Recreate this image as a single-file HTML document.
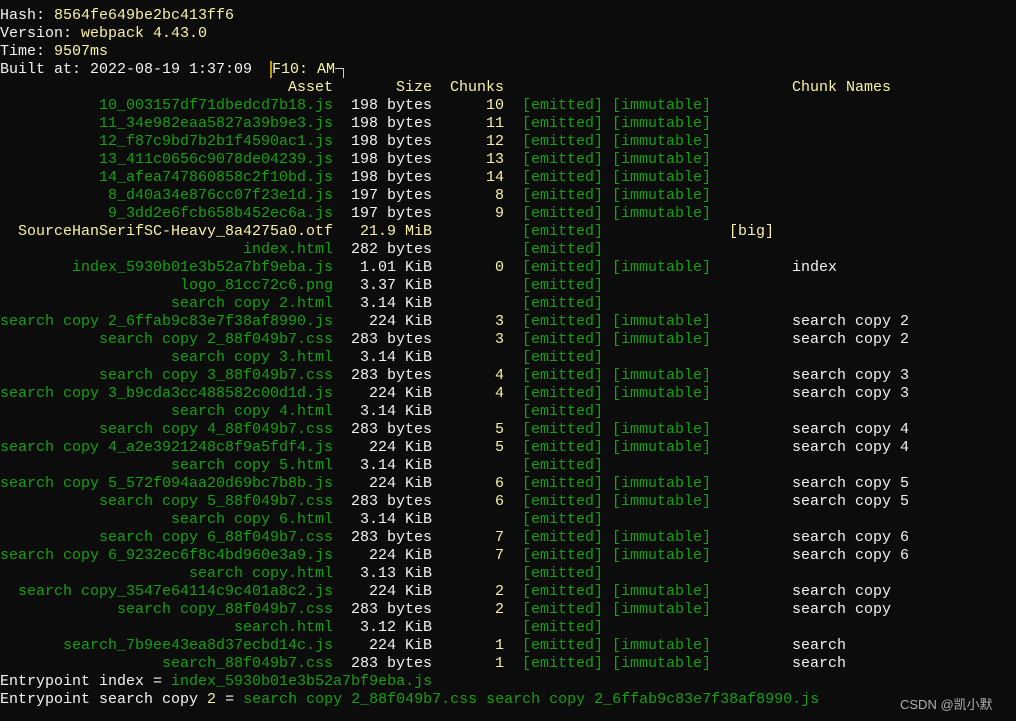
<!DOCTYPE html>
<html><head><meta charset="utf-8"><style>
html,body{margin:0;padding:0;background:#0c0c0c;width:1016px;height:721px;overflow:hidden}
body{font-family:"Liberation Mono",monospace;font-size:15px;color:#f2f2f2;position:relative}
.r{position:absolute;left:0;height:18px;line-height:18px;white-space:pre;width:1016px}
.r span{position:absolute;top:0}
.a{right:683px;color:#13a10e;text-align:right}
.s{right:584px;color:#f2f2f2}
.c{right:512px;color:#f9f1a5}
.e{left:522px;color:#13a10e}
.i{left:612px;color:#13a10e}
.n{left:792px;color:#f2f2f2}
.y{color:#f9f1a5}
.g{color:#13a10e}
.w{position:absolute;left:900px;top:694px;font-family:"Liberation Sans","Noto Sans CJK SC",sans-serif;font-size:13px;color:#b0b0b0}
</style></head><body>
<div class="r" style="top:7px">Hash: <b class="y" style="font-weight:normal">8564fe649be2bc413ff6</b></div>
<div class="r" style="top:25px">Version: <b class="y" style="font-weight:normal">webpack 4.43.0</b></div>
<div class="r" style="top:43px">Time: <b class="y" style="font-weight:normal">9507ms</b></div>
<div class="r" style="top:61px">Built at: 2022-08-19 1:37:09  <b class="y" style="font-weight:normal;border-left:2px solid #c19c00">F10: AM</b><b style="display:inline-block;width:9px;height:10px;vertical-align:middle;border-top:1px solid #ccc;border-right:1px solid #ccc;position:relative;top:4px;box-sizing:border-box;font-weight:normal"></b></div>
<div class="r" style="top:79px"><span class="a y">Asset</span><span class="s y">Size</span><span class="y" style="left:450px">Chunks</span><span class="y" style="left:792px">Chunk Names</span></div>

<div class="r" style="top:97px"><span class="a">10_003157df71dbedcd7b18.js</span><span class="s">198 bytes</span><span class="c">10</span><span class="e">[emitted]</span><span class="i">[immutable]</span></div>
<div class="r" style="top:115px"><span class="a">11_34e982eaa5827a39b9e3.js</span><span class="s">198 bytes</span><span class="c">11</span><span class="e">[emitted]</span><span class="i">[immutable]</span></div>
<div class="r" style="top:133px"><span class="a">12_f87c9bd7b2b1f4590ac1.js</span><span class="s">198 bytes</span><span class="c">12</span><span class="e">[emitted]</span><span class="i">[immutable]</span></div>
<div class="r" style="top:151px"><span class="a">13_411c0656c9078de04239.js</span><span class="s">198 bytes</span><span class="c">13</span><span class="e">[emitted]</span><span class="i">[immutable]</span></div>
<div class="r" style="top:169px"><span class="a">14_afea747860858c2f10bd.js</span><span class="s">198 bytes</span><span class="c">14</span><span class="e">[emitted]</span><span class="i">[immutable]</span></div>
<div class="r" style="top:187px"><span class="a">8_d40a34e876cc07f23e1d.js</span><span class="s">197 bytes</span><span class="c">8</span><span class="e">[emitted]</span><span class="i">[immutable]</span></div>
<div class="r" style="top:205px"><span class="a">9_3dd2e6fcb658b452ec6a.js</span><span class="s">197 bytes</span><span class="c">9</span><span class="e">[emitted]</span><span class="i">[immutable]</span></div>
<div class="r" style="top:223px"><span class="a y">SourceHanSerifSC-Heavy_8a4275a0.otf</span><span class="s y">21.9 MiB</span><span class="e">[emitted]</span><span class="y" style="left:729px">[big]</span></div>
<div class="r" style="top:241px"><span class="a">index.html</span><span class="s">282 bytes</span><span class="e">[emitted]</span></div>
<div class="r" style="top:259px"><span class="a">index_5930b01e3b52a7bf9eba.js</span><span class="s">1.01 KiB</span><span class="c">0</span><span class="e">[emitted]</span><span class="i">[immutable]</span><span class="n">index</span></div>
<div class="r" style="top:277px"><span class="a">logo_81cc72c6.png</span><span class="s">3.37 KiB</span><span class="e">[emitted]</span></div>
<div class="r" style="top:295px"><span class="a">search copy 2.html</span><span class="s">3.14 KiB</span><span class="e">[emitted]</span></div>
<div class="r" style="top:313px"><span class="a">search copy 2_6ffab9c83e7f38af8990.js</span><span class="s">224 KiB</span><span class="c">3</span><span class="e">[emitted]</span><span class="i">[immutable]</span><span class="n">search copy 2</span></div>
<div class="r" style="top:331px"><span class="a">search copy 2_88f049b7.css</span><span class="s">283 bytes</span><span class="c">3</span><span class="e">[emitted]</span><span class="i">[immutable]</span><span class="n">search copy 2</span></div>
<div class="r" style="top:349px"><span class="a">search copy 3.html</span><span class="s">3.14 KiB</span><span class="e">[emitted]</span></div>
<div class="r" style="top:367px"><span class="a">search copy 3_88f049b7.css</span><span class="s">283 bytes</span><span class="c">4</span><span class="e">[emitted]</span><span class="i">[immutable]</span><span class="n">search copy 3</span></div>
<div class="r" style="top:385px"><span class="a">search copy 3_b9cda3cc488582c00d1d.js</span><span class="s">224 KiB</span><span class="c">4</span><span class="e">[emitted]</span><span class="i">[immutable]</span><span class="n">search copy 3</span></div>
<div class="r" style="top:403px"><span class="a">search copy 4.html</span><span class="s">3.14 KiB</span><span class="e">[emitted]</span></div>
<div class="r" style="top:421px"><span class="a">search copy 4_88f049b7.css</span><span class="s">283 bytes</span><span class="c">5</span><span class="e">[emitted]</span><span class="i">[immutable]</span><span class="n">search copy 4</span></div>
<div class="r" style="top:439px"><span class="a">search copy 4_a2e3921248c8f9a5fdf4.js</span><span class="s">224 KiB</span><span class="c">5</span><span class="e">[emitted]</span><span class="i">[immutable]</span><span class="n">search copy 4</span></div>
<div class="r" style="top:457px"><span class="a">search copy 5.html</span><span class="s">3.14 KiB</span><span class="e">[emitted]</span></div>
<div class="r" style="top:475px"><span class="a">search copy 5_572f094aa20d69bc7b8b.js</span><span class="s">224 KiB</span><span class="c">6</span><span class="e">[emitted]</span><span class="i">[immutable]</span><span class="n">search copy 5</span></div>
<div class="r" style="top:493px"><span class="a">search copy 5_88f049b7.css</span><span class="s">283 bytes</span><span class="c">6</span><span class="e">[emitted]</span><span class="i">[immutable]</span><span class="n">search copy 5</span></div>
<div class="r" style="top:511px"><span class="a">search copy 6.html</span><span class="s">3.14 KiB</span><span class="e">[emitted]</span></div>
<div class="r" style="top:529px"><span class="a">search copy 6_88f049b7.css</span><span class="s">283 bytes</span><span class="c">7</span><span class="e">[emitted]</span><span class="i">[immutable]</span><span class="n">search copy 6</span></div>
<div class="r" style="top:547px"><span class="a">search copy 6_9232ec6f8c4bd960e3a9.js</span><span class="s">224 KiB</span><span class="c">7</span><span class="e">[emitted]</span><span class="i">[immutable]</span><span class="n">search copy 6</span></div>
<div class="r" style="top:565px"><span class="a">search copy.html</span><span class="s">3.13 KiB</span><span class="e">[emitted]</span></div>
<div class="r" style="top:583px"><span class="a">search copy_3547e64114c9c401a8c2.js</span><span class="s">224 KiB</span><span class="c">2</span><span class="e">[emitted]</span><span class="i">[immutable]</span><span class="n">search copy</span></div>
<div class="r" style="top:601px"><span class="a">search copy_88f049b7.css</span><span class="s">283 bytes</span><span class="c">2</span><span class="e">[emitted]</span><span class="i">[immutable]</span><span class="n">search copy</span></div>
<div class="r" style="top:619px"><span class="a">search.html</span><span class="s">3.12 KiB</span><span class="e">[emitted]</span></div>
<div class="r" style="top:637px"><span class="a">search_7b9ee43ea8d37ecbd14c.js</span><span class="s">224 KiB</span><span class="c">1</span><span class="e">[emitted]</span><span class="i">[immutable]</span><span class="n">search</span></div>
<div class="r" style="top:655px"><span class="a">search_88f049b7.css</span><span class="s">283 bytes</span><span class="c">1</span><span class="e">[emitted]</span><span class="i">[immutable]</span><span class="n">search</span></div>
<div class="r" style="top:673px">Entrypoint index = <b class="g" style="font-weight:normal">index_5930b01e3b52a7bf9eba.js</b></div>
<div class="r" style="top:691px">Entrypoint search copy <b class="y" style="font-weight:normal">2</b> = <b class="g" style="font-weight:normal">search copy 2_88f049b7.css search copy 2_6ffab9c83e7f38af8990.js</b></div>
<div class="w">CSDN @凯小默</div>
</body></html>
